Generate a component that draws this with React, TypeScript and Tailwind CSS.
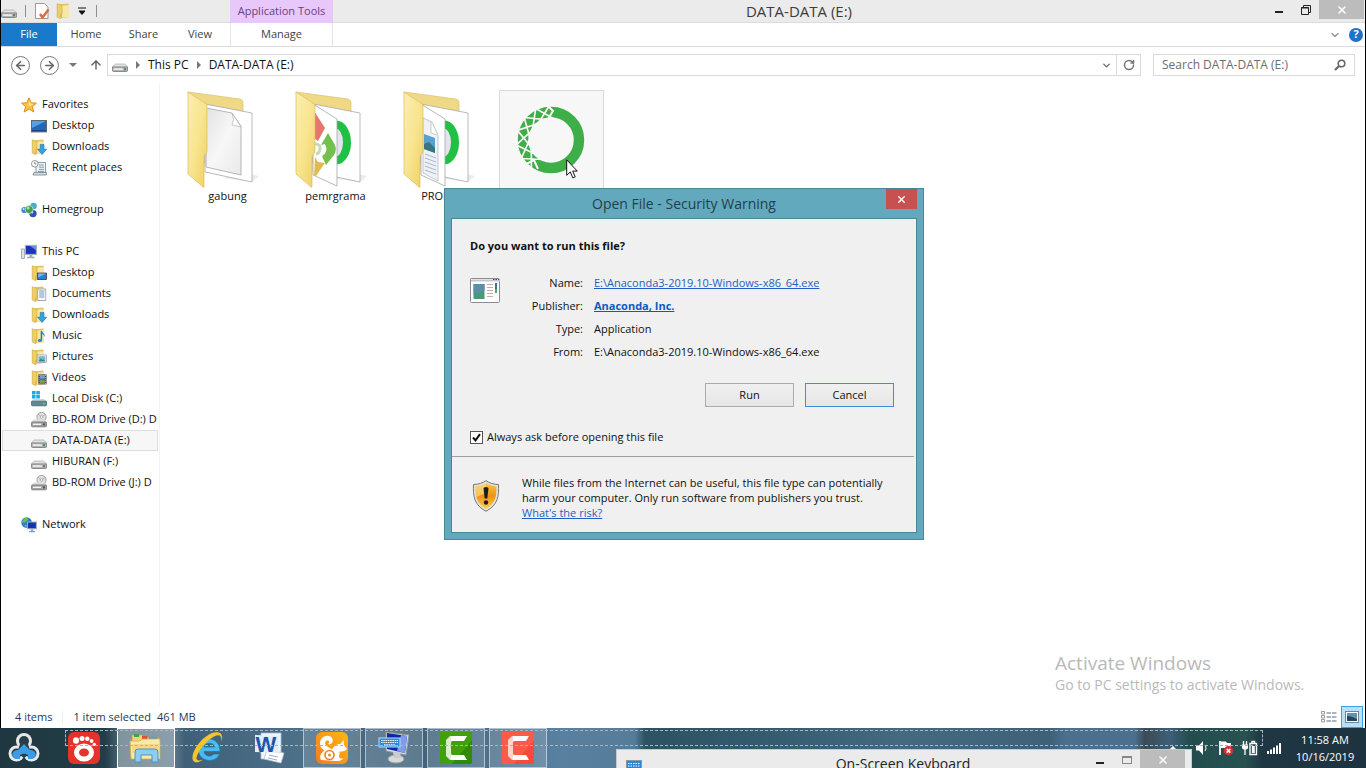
import React from "react";
import {
  ArrowLeft,
  ArrowRight,
  ArrowUp,
  ChevronDown,
  RotateCw,
  X,
} from "lucide-react";

type IconProps = { className?: string };

function DriveIcon({ className = "h-4 w-4" }: IconProps) {
  return (
    <svg viewBox="0 0 16 16" className={className} aria-hidden="true">
      <path d="M3.500 7h9L16 10v1H0v-1z" fill="#e3e3e3" stroke="#9a9a9a" strokeWidth=".6" />
      <rect x=".4" y="9.900" width="15.200" height="4.600" rx="1.200" fill="#b2b2b2" stroke="#777" strokeWidth=".8" />
      <rect x="1.800" y="11.300" width="9" height="1.600" fill="#f0f0f0" />
      <rect x="12" y="11.200" width="2" height="2" fill="#4d8a4f" />
    </svg>
  );
}

function OpticalIcon() {
  return (
    <svg viewBox="0 0 16 16" className="h-4 w-4" aria-hidden="true">
      <circle cx="10.5" cy="5" r="4.6" fill="#e2e2e2" stroke="#8e8e8e" strokeWidth=".8" />
      <path d="M10.5 5L7 2.2M10.5 5l3.6-2.4" stroke="#aaa" strokeWidth=".8" />
      <circle cx="10.5" cy="5" r="1.3" fill="#fff" stroke="#888" strokeWidth=".6" />
      <path d="M2.5 7.5h6l6 .5 1.5 2v1H0z" fill="#dcdcdc" />
      <rect x=".4" y="10" width="15.2" height="4.8" rx="1.2" fill="#a2a2a2" stroke="#6f6f6f" strokeWidth=".8" />
      <rect x="2" y="11.6" width="8" height="1.4" fill="#f2f2f2" />
      <rect x="12" y="11.4" width="2" height="2" fill="#555" />
    </svg>
  );
}

function LocalDiskIcon() {
  return (
    <svg viewBox="0 0 16 16" className="h-4 w-4" aria-hidden="true">
      <path d="M1 0h3.6v3.4H1zM5.3 0h3.6v3.4H5.3zM1 4.1h3.6v3.4H1zM5.3 4.1h3.6v3.4H5.3z" fill="#18aee4" />
      <path d="M2.5 8h10.5l3 2.6v.8H0v-.8z" fill="#cfd6da" />
      <rect x=".4" y="10.2" width="15.2" height="4.6" rx="1" fill="#5f8794" stroke="#4c626b" strokeWidth=".8" />
      <rect x="11.8" y="11.6" width="2.2" height="2" fill="#56c46a" />
    </svg>
  );
}

function SmallFolder({ children, className = "h-4 w-4" }: IconProps & { children?: React.ReactNode }) {
  return (
    <svg viewBox="0 0 16 16" className={className} aria-hidden="true">
      <path d="M4 1.2l8.500-.7v13.8L4 15z" fill="#e3c25c" />
      <path d="M6 2.6l7-.4v12L6 14.6z" fill="#f8e7a4" />
      <path d="M1.2.8L6 2.400v8.400l-1.200.6v4.400L1.200 14z" fill="#f0cf62" stroke="#c9a43c" strokeWidth=".6" />
      {children}
    </svg>
  );
}

const DownloadsIcon = () => (
  <SmallFolder>
    <path d="M9.2 5.6h3.8v4.6h2.6L11.1 15.6 6.6 10.2h2.6z" fill="#35a3e0" stroke="#1c6ea8" strokeWidth=".6" />
  </SmallFolder>
);
const FolderDesktopIcon = () => (
  <SmallFolder>
    <rect x="6.6" y="8" width="9" height="6.6" fill="#2f7bd4" stroke="#333" strokeWidth=".7" />
    <path d="M7.2 8.6h7.8L7.2 12.6z" fill="#7db5ef" />
  </SmallFolder>
);
const DocumentsIcon = () => (
  <SmallFolder>
    <rect x="6.8" y="3" width="8" height="11.4" fill="#fbfbfb" stroke="#8b96a3" strokeWidth=".7" />
    <path d="M8.2 5h5.2M8.2 7h5.2M8.2 9h5.2M8.2 11h5.2" stroke="#4f79b8" strokeWidth=".8" />
  </SmallFolder>
);
const MusicIcon = () => (
  <SmallFolder>
    <path d="M10.4 3v9" stroke="#1a78c2" strokeWidth="1.4" />
    <path d="M10.6 2.4c.4 2.4 4.4 2.8 2.8 7 .2-2.4-1.4-3-2.8-3.6z" fill="#2c8edb" />
    <ellipse cx="8.9" cy="12.4" rx="2.2" ry="1.6" fill="#2c8edb" />
  </SmallFolder>
);
const PicturesIcon = () => (
  <SmallFolder>
    <rect x="6.2" y="6" width="9.4" height="7.6" fill="#fff" stroke="#8b96a3" strokeWidth=".7" />
    <rect x="7.4" y="7.2" width="7" height="5.2" fill="#76b6d8" />
    <path d="M7.4 12.4l2.4-3 1.8 1.6 1.2-.8 1.6 2.2z" fill="#3e8b63" />
  </SmallFolder>
);
const VideosIcon = () => (
  <SmallFolder>
    <rect x="7.2" y="4.4" width="8.4" height="10" fill="#3f4750" />
    <rect x="9" y="5" width="4.8" height="3.8" fill="#6aa0d6" />
    <rect x="9" y="9.6" width="4.8" height="4.2" fill="#7f9a57" />
    <path d="M8.1 5v9M14.7 5v9" stroke="#dfe5ea" strokeWidth=".8" strokeDasharray="1 1" />
  </SmallFolder>
);

const StarIcon = () => (
  <svg viewBox="0 0 16 16" className="h-4 w-4" aria-hidden="true">
    <path d="M8 .8l2.1 5 5.3.4-4.1 3.4 1.5 5.4L8 12l-4.8 3 1.5-5.4L.6 6.2l5.3-.4z" fill="#f9c440" stroke="#e08a1b" strokeLinejoin="round" />
    <path d="M8 3l1.4 3.6 3.2.4L8 9z" fill="#fde79b" />
  </svg>
);
const DesktopIcon = () => (
  <svg viewBox="0 0 16 16" className="h-4 w-4" aria-hidden="true">
    <rect x=".5" y="2.5" width="15" height="11.4" fill="#2567bd" stroke="#5d6873" />
    <path d="M1 3h14L1 10z" fill="#5c9de2" />
    <path d="M1 12.6h14" stroke="#1b3e72" />
  </svg>
);
const RecentIcon = () => (
  <svg viewBox="0 0 16 16" className="h-4 w-4" aria-hidden="true">
    <path d="M5 2.5h9.5V13H5z" fill="#eef3f6" stroke="#77838c" strokeWidth=".8" />
    <path d="M7.8 5h5M8 7.2h5M8 9.4h5M7 11.4h6" stroke="#7f9cab" />
    <path d="M3 12.4h12.4v2.6H2z" fill="#d2dbe0" stroke="#77838c" strokeWidth=".8" />
    <circle cx="3.8" cy="3.8" r="3.3" fill="#fff" stroke="#7d8a84" strokeWidth=".9" />
    <path d="M3.8 1.8v2.2h1.6" fill="none" stroke="#3e7b4c" strokeWidth=".8" />
  </svg>
);
const HomegroupIcon = () => (
  <svg viewBox="0 0 16 16" className="h-4 w-4" aria-hidden="true">
    <circle cx="12.6" cy="4" r="3.2" fill="#46b0c9" />
    <circle cx="3.4" cy="8" r="3.1" fill="#3f8fd0" />
    <circle cx="12" cy="11.6" r="3.7" fill="#3055a8" />
    <circle cx="8.2" cy="7.6" r="4" fill="#43a047" stroke="#fff" strokeWidth=".5" />
    <circle cx="7.2" cy="6" r="1.5" fill="#a9dfa5" />
    <circle cx="11.2" cy="10.4" r="1.1" fill="#b9cdf2" />
    <circle cx="2.6" cy="7" r=".9" fill="#d0e8fb" />
  </svg>
);
const ComputerIcon = () => (
  <svg viewBox="0 0 16 16" className="h-4 w-4" aria-hidden="true">
    <rect x=".4" y="5" width="3" height="9.6" fill="#dfe3e6" stroke="#8c9399" strokeWidth=".7" />
    <rect x="4.4" y="1.4" width="11" height="9" fill="#1b35b8" stroke="#aab2ba" strokeWidth="1.1" />
    <path d="M9 2l6 0v4z" fill="#6c8df0" />
    <path d="M8.4 11h3v1.8h2.2v1.4H6v-1.4h2.4z" fill="#a6adb3" />
  </svg>
);
const NetworkIcon = () => (
  <svg viewBox="0 0 16 16" className="h-4 w-4" aria-hidden="true">
    <circle cx="5.6" cy="5.6" r="5.3" fill="#2b7fd0" />
    <path d="M2 2.6c2-2 4-1.8 5.6-1L6 4 3.8 5.6 1 6z" fill="#63c14f" />
    <path d="M3 8l3 .6-1 2.2z" fill="#63c14f" />
    <rect x="6.4" y="5" width="9" height="6.8" fill="#1633b4" stroke="#a9b3c0" />
    <path d="M9.8 12.4h2.6V14H14v1.2H8V14h1.8z" fill="#7fa3c2" />
  </svg>
);

type NavEntry = { label: string; icon: React.ReactNode; root?: boolean; selected?: boolean };
const nav: NavEntry[][] = [
  [
    { label: "Favorites", icon: <StarIcon />, root: true },
    { label: "Desktop", icon: <DesktopIcon /> },
    { label: "Downloads", icon: <DownloadsIcon /> },
    { label: "Recent places", icon: <RecentIcon /> },
  ],
  [{ label: "Homegroup", icon: <HomegroupIcon />, root: true }],
  [
    { label: "This PC", icon: <ComputerIcon />, root: true },
    { label: "Desktop", icon: <FolderDesktopIcon /> },
    { label: "Documents", icon: <DocumentsIcon /> },
    { label: "Downloads", icon: <DownloadsIcon /> },
    { label: "Music", icon: <MusicIcon /> },
    { label: "Pictures", icon: <PicturesIcon /> },
    { label: "Videos", icon: <VideosIcon /> },
    { label: "Local Disk (C:)", icon: <LocalDiskIcon /> },
    { label: "BD-ROM Drive (D:) D", icon: <OpticalIcon /> },
    { label: "DATA-DATA (E:)", icon: <DriveIcon />, selected: true },
    { label: "HIBURAN (F:)", icon: <DriveIcon /> },
    { label: "BD-ROM Drive (J:) D", icon: <OpticalIcon /> },
  ],
  [{ label: "Network", icon: <NetworkIcon />, root: true }],
];

function FolderArt({ children }: { children: React.ReactNode }) {
  return (
    <svg viewBox="5 6 105 98" className="h-[98px] w-full" aria-hidden="true">
      <defs>
        <linearGradient id="flap" x1="0" y1="0" x2="1" y2="1">
          <stop offset="0" stopColor="#fbeeb0" />
          <stop offset=".5" stopColor="#f8e58f" />
          <stop offset="1" stopColor="#efcf66" />
        </linearGradient>
        <linearGradient id="sheet" x1="0" y1="0" x2="1" y2="1">
          <stop offset="0" stopColor="#e2e2e2" />
          <stop offset=".5" stopColor="#f7f7f7" />
          <stop offset="1" stopColor="#e9e9e9" />
        </linearGradient>
      </defs>
      <path d="M80 90l9 2-7 6-30-4z" fill="#ececec" />
      <path d="M18 8l52 7q3 1 3 4v76L37 88z" fill="#efd987" stroke="#dcc16a" strokeWidth=".7" />
      <path d="M35 20l47 9v69l-47-10z" fill="#fff" stroke="#a9a9a9" strokeWidth=".8" />
      {children}
      <path d="M18 8l17 11q2 1 2 3v45q0 2-2 4l-1 1v31q-1 1-2-1L18 90z" fill="url(#flap)" stroke="#dcbc5e" strokeWidth=".7" />
    </svg>
  );
}

const FrontPage = () => (
  <path d="M35 20l24 15v67L35 91z" fill="#fff" stroke="#a5a5a5" strokeWidth=".8" />
);
const GreenRing = () => (
  <ellipse cx="58" cy="58.500" rx="11" ry="18" fill="#e4e4ee" stroke="#1fc043" strokeWidth="8" />
);

function SheetArt() {
  return (
    <FolderArt>
      <path d="M36 24l26 5 9 13v49L36 83z" fill="url(#sheet)" stroke="#a5a5a5" strokeWidth=".8" />
      <path d="M62 29q3 7 0 12l9 2z" fill="#fff" stroke="#b5b5b5" strokeWidth=".7" />
    </FolderArt>
  );
}
function ProgramArt() {
  return (
    <FolderArt>
      <GreenRing />
      <FrontPage />
      <path d="M36 27l11 17-7 13-4-3z" fill="#e8756d" />
      <path d="M50 49l7 12q2 5-1 10l-8 10-4-9q7-4 3-12l-4 1z" fill="#74c04f" />
      <path d="M37 73l3 5 7 1-9 13h-2z" fill="#e0bb55" />
      <path d="M37 60q6 0 5 5t-4 5" fill="none" stroke="#c4d9b8" strokeWidth="3" />
    </FolderArt>
  );
}
function ReportArt() {
  return (
    <FolderArt>
      <GreenRing />
      <FrontPage />
      <path d="M37 34l9 4 6 13v46l-15-8z" fill="#eef1f6" stroke="#aeb4bd" strokeWidth=".7" />
      <path d="M45 38v11l6 2" fill="#fff" stroke="#b5c29c" strokeWidth=".7" />
      <path d="M38 50l11 4v15l-11-4z" fill="#5b9fd0" />
      <path d="M38 60l5-2 6 6v5l-11-4z" fill="#3a7480" />
      <path d="M39 70l11 4M39 74l11 4M39 78l11 4M39 82l11 4M39 86l11 4" stroke="#a9b7cd" />
    </FolderArt>
  );
}

function ringPoint(radius: number, degrees: number) {
  const a = (degrees * Math.PI) / 180;
  return `${(51 + radius * Math.cos(a)).toFixed(1)} ${(49 - radius * Math.sin(a)).toFixed(1)}`;
}
const latticePath = [92, 116, 140, 164, 188, 212, 236]
  .map((a) => {
    const back = a > 92 ? `M${ringPoint(35, a)}L${ringPoint(21, a - 36)}` : "";
    const forth = a < 236 ? `M${ringPoint(35, a)}L${ringPoint(21, a + 36)}` : "";
    return back + forth;
  })
  .join("");

function AnacondaArt() {
  return (
    <svg viewBox="0 0 103 98" className="h-[98px] w-full" aria-hidden="true">
      <circle cx="51" cy="49" r="28" fill="none" stroke="#3eae49" strokeWidth="10.500" />
      <path d={latticePath} stroke="#f7f7f7" strokeWidth="1.700" fill="none" />
      <path d="M47 14l6 6-5 8M24 74l10-5 4 9" stroke="#f7f7f7" strokeWidth="2" fill="none" />
    </svg>
  );
}

const files = [
  { name: "gabung", art: <SheetArt /> },
  { name: "pemrgrama", art: <ProgramArt /> },
  { name: "PRODUK", art: <ReportArt /> },
];

function TitleBar() {
  return (
    <header className="grid h-[23px] grid-cols-[229px_103px_1fr_auto] border-b border-[#dcdcdc] bg-[#ebebeb]">
      <div className="flex items-center">
        <DriveIcon className="h-4 w-4" />
        <span className="ml-2 h-3 w-px bg-[#8f8f8f]" />
        <svg viewBox="0 0 16 16" className="ml-2 h-4 w-4" aria-hidden="true">
          <path d="M1.500.5h9l3.500 3.500v11.500H1.500z" fill="#fff" stroke="#999" />
          <path d="M6 11l2.500 3.500 6-8" fill="none" stroke="#e0683a" strokeWidth="2.400" />
        </svg>
        <SmallFolder className="ml-[6px] h-4 w-4" />
        <svg viewBox="0 0 8 8" className="ml-[6px] h-2 w-2" aria-hidden="true">
          <path d="M0 1h8M1 4h6L4 7.500z" stroke="#111" fill="#111" />
        </svg>
        <span className="ml-[10px] h-3 w-px bg-[#8f8f8f]" />
      </div>
      <div className="flex items-center justify-center bg-[#e8c8fb] text-[11px] whitespace-nowrap text-[#6b3f80]">Application Tools</div>
      <h1 className="flex items-center justify-center text-[15px] text-[#3c3c3c]">DATA-DATA (E:)</h1>
      <div className="flex items-start pr-px">
        <button aria-label="Minimize" className="flex h-[19px] w-[27px] items-end justify-center pb-[6px]">
          <span className="h-[2px] w-2 bg-[#222]" />
        </button>
        <button aria-label="Restore" className="flex h-[19px] w-[27px] items-center justify-center">
          <svg viewBox="0 0 10 10" className="h-[10px] w-[10px]" aria-hidden="true">
            <path d="M2.500 2V.5h7v7H8M.5 2.500h7v7h-7z" fill="none" stroke="#222" />
            <path d="M0 3h8" stroke="#222" />
          </svg>
        </button>
        <button aria-label="Close" className="flex h-[19px] w-[45px] items-center justify-center bg-[#bcbcbc] text-white">
          <X size={12} strokeWidth={3} />
        </button>
      </div>
    </header>
  );
}

function Ribbon() {
  return (
    <nav className="flex h-6 items-stretch border-b border-[#dadbdc] text-[11px] text-[#444]">
      <button className="w-14 bg-[#1979ca] text-white">File</button>
      <button className="w-[58px]">Home</button>
      <button className="w-[57px]">Share</button>
      <button className="w-14">View</button>
      <button className="ml-[2px] w-[103px] border-x border-[#e6e0ea]">Manage</button>
      <div className="ml-auto flex items-center gap-2 pr-[2px]">
        <button aria-label="Expand ribbon">
          <ChevronDown size={12} strokeWidth={3} color="#999" />
        </button>
        <button aria-label="Help" className="flex h-[14px] w-[14px] items-center justify-center rounded-full bg-[#1e73c8] text-[11px] font-bold text-white">
          ?
        </button>
      </div>
    </nav>
  );
}

function Crumb() {
  return (
    <svg viewBox="0 0 4 8" className="h-2 w-1" aria-hidden="true">
      <path d="M0 0l4 4-4 4z" fill="#777" />
    </svg>
  );
}

function AddressRow() {
  return (
    <div className="flex h-9 items-center px-[10px] text-[12px]">
      <button aria-label="Back" className="flex h-[19px] w-[19px] items-center justify-center rounded-full border border-[#777] text-[#666]">
        <ArrowLeft size={13} strokeWidth={3} />
      </button>
      <button aria-label="Forward" className="ml-[10px] flex h-[19px] w-[19px] items-center justify-center rounded-full border border-[#777] text-[#666]">
        <ArrowRight size={13} strokeWidth={3} />
      </button>
      <button aria-label="Recent locations" className="ml-[10px]">
        <svg viewBox="0 0 8 4" className="h-1 w-2" aria-hidden="true">
          <path d="M0 0h8L4 4z" fill="#777" />
        </svg>
      </button>
      <button aria-label="Up" className="ml-3 text-[#666]">
        <ArrowUp size={14} strokeWidth={2.5} />
      </button>
      <div className="ml-1 flex h-[22px] flex-1 items-center border border-[#d9d9d9] pl-1">
        <DriveIcon />
        <div className="ml-2 flex items-center gap-2">
          <Crumb />
          <a href="#this-pc">This PC</a>
          <Crumb />
          <a href="#data">DATA-DATA (E:)</a>
        </div>
        <button aria-label="Previous locations" className="ml-auto flex h-full w-[19px] items-center justify-center">
          <ChevronDown size={11} strokeWidth={3} color="#666" />
        </button>
        <button aria-label="Refresh" className="flex h-full w-6 items-center justify-center border-l border-[#d9d9d9]">
          <RotateCw size={12} strokeWidth={3} color="#777" />
        </button>
      </div>
      <label className="ml-3 flex h-[22px] w-[202px] items-center border border-[#d9d9d9] px-2">
        <input type="search" aria-label="Search DATA-DATA (E:)" placeholder="Search DATA-DATA (E:)" className="min-w-0 flex-1 outline-none placeholder:text-[#6d6d6d]" />
        <svg viewBox="0 0 12 12" className="h-3 w-3" aria-hidden="true">
          <circle cx="7.500" cy="4.500" r="3.300" fill="none" stroke="#666" strokeWidth="1.600" />
          <path d="M5 7L1 11" stroke="#666" strokeWidth="2.200" />
        </svg>
      </label>
    </div>
  );
}

function Sidebar() {
  return (
    <aside className="flex w-[159px] flex-col gap-[21px] overflow-hidden border-r border-[#f3f3f3] pt-[11px] text-[11px]">
      {nav.map((group) => (
        <ul key={group[0].label}>
          {group.map((item) => (
            <li
              key={item.label}
              className={
                "mr-px ml-px flex h-[21px] items-center gap-[5px] overflow-hidden border whitespace-nowrap " +
                (item.root ? "pl-[18px] " : "pl-7 ") +
                (item.selected ? "border-[#dedede] bg-[#f7f7f7]" : "border-transparent")
              }
            >
              <span className="shrink-0">{item.icon}</span>
              <span>{item.label}</span>
            </li>
          ))}
        </ul>
      ))}
    </aside>
  );
}

function SecurityDialog() {
  const rows = [
    { label: "Name:", value: <a href="#file" className="text-[#1f5fc4] underline">E:\Anaconda3-2019.10-Windows-x86_64.exe</a> },
    { label: "Publisher:", value: <a href="#publisher" className="font-bold text-[#0a5bc4] underline">Anaconda, Inc.</a> },
    { label: "Type:", value: "Application" },
    { label: "From:", value: "E:\\Anaconda3-2019.10-Windows-x86_64.exe" },
  ];
  return (
    <section role="dialog" aria-label="Open File - Security Warning" className="absolute top-[188px] left-[444px] w-[480px] border border-[#4c8598] bg-[#63a9be] px-[6px] pb-[6px] text-[11px]">
      <div className="relative flex h-[29px] items-center justify-center">
        <h2 className="text-[14px] text-[#23404a]">Open File - Security Warning</h2>
        <button aria-label="Close" className="absolute top-0 right-0 flex h-5 w-[31px] items-center justify-center bg-[#c75050] text-white">
          <X size={11} strokeWidth={3} />
        </button>
      </div>
      <div className="border border-[#4c8598] bg-[#f0f0f0]">
        <div className="px-[18px] pt-[19px] pb-[11px]">
          <p className="font-bold leading-4">Do you want to run this file?</p>
          <div className="mt-[21px] flex">
            <svg viewBox="0 0 31 26" className="mt-[3px] h-[26px] w-[31px]" aria-hidden="true">
              <rect x=".5" y=".5" width="29" height="24" rx="1" fill="#fff" stroke="#8b8b92" />
              <path d="M1 2.500h29" stroke="#c4c4d0" strokeWidth="2" />
              <path d="M23 1.500h1.500M25.500 1.500H27M28 1.500h1" stroke="#444" />
              <rect x="3.500" y="6" width="11" height="15" fill="#4a9a79" />
              <path d="M3.500 6h11v6l-11 5z" fill="#5b8fa8" />
              <path d="M17 6.500h6M17 9.500h6M17 12.500h6M17 15.500h6M17 18.500h6" stroke="#c9a9a9" />
              <rect x="25" y="5" width="2" height="10" fill="#3a6f9f" />
              <rect x="25" y="11" width="2" height="4" fill="#4caf50" />
            </svg>
            <dl className="grid flex-1 grid-cols-[82px_1fr] gap-x-[11px] gap-y-[7px] leading-4">
              {rows.map((row) => (
                <React.Fragment key={row.label}>
                  <dt className="text-right">{row.label}</dt>
                  <dd>{row.value}</dd>
                </React.Fragment>
              ))}
            </dl>
          </div>
          <div className="mt-[23px] flex justify-end gap-[11px] pr-1">
            <button className="h-6 w-[89px] border border-[#acacac] bg-linear-to-b from-[#f0f0f0] to-[#e6e6e6]">Run</button>
            <button className="h-6 w-[89px] border border-[#3c8fe0] bg-linear-to-b from-[#f0f0f0] to-[#e6e6e6]">Cancel</button>
          </div>
          <label className="mt-[22px] flex items-center gap-1 leading-4">
            <span className="relative flex h-[13px] w-[13px]">
              <input type="checkbox" defaultChecked className="peer h-[13px] w-[13px] appearance-none border border-[#555] bg-white" />
              <svg viewBox="0 0 13 13" className="pointer-events-none absolute inset-0 hidden h-[13px] w-[13px] peer-checked:block" aria-hidden="true">
                <path d="M3 6.500l2.500 2.800L10 3.200" fill="none" stroke="#111" strokeWidth="2" />
              </svg>
            </span>
            Always ask before opening this file
          </label>
        </div>
        <div className="mr-[2px] border-t border-[#a0a0a0]" />
        <div className="flex gap-[22px] px-5 pt-[18px] pb-3">
          <svg viewBox="0 0 28 32" className="mt-[5px] h-8 w-7" aria-hidden="true">
            <defs>
              <linearGradient id="shield" x1="0" y1="0" x2="0" y2="1">
                <stop offset="0" stopColor="#fbc64a" />
                <stop offset=".5" stopColor="#f0920f" />
                <stop offset="1" stopColor="#fbd55a" />
              </linearGradient>
            </defs>
            <path d="M14 .7C11 3 6 4.500 1.500 4.500 1 16 2 25 14 31.300 26 25 27 16 26.500 4.500 22 4.500 17 3 14 .7z" fill="#e3e3e3" stroke="#777" />
            <path d="M14 3C11 5 7 6.200 3.500 6.400 3.300 16 4.500 23.500 14 29 23.500 23.500 24.700 16 24.500 6.400 21 6.200 17 5 14 3z" fill="url(#shield)" />
            <path d="M14 3c-3 2-7 3.200-10.500 3.400C3.400 11 3.600 14 4.600 17L14 13z" fill="#fde08a" opacity=".6" />
            <path d="M11.500 8q2.500-1.800 5 0l-1.200 10.500h-2.600z" fill="#1d1d1d" />
            <circle cx="14" cy="22.500" r="2.200" fill="#1d1d1d" />
          </svg>
          <p className="flex-1 leading-[15px]">
            While files from the Internet can be useful, this file type can potentially
            <br />
            harm your computer. Only run software from publishers you trust.
            <br />
            <a href="#risk" className="text-[#1f5fc4] underline">What's the risk?</a>
          </p>
        </div>
      </div>
    </section>
  );
}

const StartLogo = () => (
  <svg viewBox="0 0 32 32" className="h-8 w-8" aria-hidden="true">
    <g fill="#e9e9e9">
      <circle cx="16" cy="9" r="8" />
      <circle cx="8.500" cy="21.500" r="8" />
      <circle cx="23.500" cy="21.500" r="8" />
    </g>
    <g fill="#263f49">
      <circle cx="16" cy="9" r="5" />
      <circle cx="8.500" cy="21.500" r="5" />
      <circle cx="23.500" cy="21.500" r="5" />
      <path d="M12 12h8l3 9-7 5-7-5z" />
    </g>
    <path d="M16 12l6 6q5 0 6 5-1 4-5 4h-3v-4q-4-2.500-8 0v4H9q-4 0-5-4 1-5 6-5z" fill="#3a9be6" />
  </svg>
);
const GomLogo = () => (
  <svg viewBox="0 0 32 32" className="h-8 w-8" aria-hidden="true">
    <rect width="32" height="32" rx="6" fill="#e5322b" />
    <ellipse cx="16" cy="20.500" rx="7.500" ry="6.500" fill="none" stroke="#fff" strokeWidth="5" />
    <ellipse cx="8" cy="8.500" rx="3" ry="3.200" fill="#fff" />
    <circle cx="14" cy="6.500" r="2.500" fill="#fff" />
    <circle cx="19.300" cy="6.800" r="2.200" fill="#fff" />
    <circle cx="23.600" cy="9" r="1.900" fill="#fff" />
    <circle cx="26.300" cy="12.400" r="1.700" fill="#fff" />
  </svg>
);
const ExplorerLogo = () => (
  <svg viewBox="0 0 34 32" className="h-8 w-[34px]" aria-hidden="true">
    <path d="M3 3h10l2 3h15v8H3z" fill="#f2d478" stroke="#c8a13f" strokeWidth=".8" />
    <path d="M5 2h5v3H5z" fill="#33a852" />
    <path d="M13 4h5v3h-5z" fill="#d9503c" />
    <path d="M20 5h8v3h-8z" fill="#4a9be0" />
    <path d="M1 9h10l2-2h18v20H2z" fill="#fbe9a6" stroke="#d1ac4f" strokeWidth=".8" />
    <path d="M3 12h27v9H3z" fill="#f5d985" />
    <path d="M6 30V20q0-3 3-3h17q3 0 3 3v10h-6v-7H12v7z" fill="#8ecdf0" stroke="#4d93c1" />
  </svg>
);
const InternetLogo = () => (
  <svg viewBox="0 0 32 32" className="h-8 w-8" aria-hidden="true">
    <path d="M28 19.500H12c.5 5 7.500 6 9.500 2.500H27.600c-3.600 10-21.400 8.500-21.400-5C6.200 3 28.400 3 28 19.500zM12 15h10.500c-.4-5-10.100-5-10.500 0z" fill="#4bb8f0" stroke="#1c78b8" strokeWidth=".8" />
    <path d="M29.500 10C33-2 22-1.500 14 4.500 5 11-3 25 2 29.500c2 1.800 6 .5 9-2-5.500 2-7.500.5-6-3.500C7.500 16.500 16 7.500 23 4c5-2 7 .5 6.500 6z" fill="#f5c32b" />
  </svg>
);
const WordLogo = () => (
  <svg viewBox="0 0 32 32" className="h-8 w-8" aria-hidden="true">
    <path d="M7 1h20v26H7z" fill="#f1f6fd" stroke="#a9bedb" strokeWidth=".8" />
    <path d="M13 18l17 3-3 10-17-4z" fill="#fff" stroke="#b6c2d2" strokeWidth=".8" />
    <path d="M15 23l9 2M14 26l9 2" stroke="#9fb1c8" />
    <path d="M1 3l24 1-1 17-23-1z" fill="#e2ecfa" />
    <text x="1.500" y="20" fontSize="22" fontWeight="700" fontFamily="Liberation Sans, sans-serif" fill="#1f54ad">W</text>
  </svg>
);
const BrowserLogo = () => (
  <svg viewBox="0 0 32 32" className="h-8 w-8" aria-hidden="true">
    <defs>
      <linearGradient id="browser" x1="0" y1="1" x2="1" y2="0">
        <stop offset="0" stopColor="#f57a1f" />
        <stop offset="1" stopColor="#fbb812" />
      </linearGradient>
    </defs>
    <rect width="32" height="32" rx="6" fill="url(#browser)" />
    <path d="M5 28c-2-4 0-7 3.500-9.500C3 16 2 8 8 4.500c5-2.500 10 1 8.500 5.500-.8 2-3 3-4.500 2 2-1.500 1-4-1-3.500-3 1-2 5 1 6.500 2 1 3 1.500 4 2.500 2-4 5-5.500 8.500-5.500l3-4 .5 5 3 4c-2 2.500-5 2.500-7.500 2.500.5 2-.5 4-.5 5.500 1 1.500 2.500 2 4.500 1-2 3-5 3-8 3z" fill="#fff" />
    <circle cx="13.500" cy="23" r="4.500" fill="#fff" stroke="#f2831c" strokeWidth="1.700" />
    <circle cx="13.500" cy="23" r="1.500" fill="#f48a1c" />
  </svg>
);
const KeyboardLogo = () => (
  <svg viewBox="0 0 32 32" className="h-8 w-8" aria-hidden="true">
    <path d="M8 0l23 3-3 20L8 19z" fill="#d9dde2" stroke="#8d949c" />
    <path d="M9 1l20 3-2 17-18-4z" fill="#1226a6" />
    <path d="M23 3l6 1-2 17-8-2z" fill="#7b9eea" />
    <ellipse cx="18" cy="27" rx="8" ry="4" fill="#d8dada" stroke="#9ba0a0" />
    <path d="M15 20h7l1 6h-7z" fill="#c9cccf" />
    <rect x="1" y="6" width="21" height="9" fill="#2a8bd8" stroke="#b9dcf5" />
    <path d="M3 8.500h17M3 10.500h17M6 12.800h11" stroke="#fff" strokeWidth="1.200" strokeDasharray="1.500 .8" />
  </svg>
);
const GreenCaptureLogo = () => (
  <svg viewBox="0 0 32 32" className="h-8 w-8" aria-hidden="true">
    <rect width="32" height="32" rx="2" fill="#2f8a05" />
    <path d="M0 0h32v8L12 32H0z" fill="#41a10c" />
    <path d="M10 4h17l-3 5H12l-2 2z" fill="#fff" />
    <path d="M10 28h17l-3-5H12l-2-2z" fill="#fff" />
    <path d="M10 4L6 8v16l4 4h1V4z" fill="#dbeccf" />
  </svg>
);
const RedCaptureLogo = () => (
  <svg viewBox="0 0 32 32" className="h-8 w-8" aria-hidden="true">
    <rect width="32" height="32" rx="2" fill="#f9493c" />
    <path d="M0 0h32v8L12 32H0z" fill="#fb5b49" />
    <path d="M10 4h17l-3 5H12l-2 2z" fill="#fff" />
    <path d="M10 28h17l-3-5H12l-2-2z" fill="#fff" />
    <path d="M10 4L6 8v16l4 4h1V4z" fill="#fcd3cd" />
  </svg>
);

const apps = [
  { name: "GOM Player", logo: <GomLogo />, frame: "border-transparent" },
  { name: "File Explorer", logo: <ExplorerLogo />, frame: "border-white bg-white/30" },
  { name: "Internet Explorer", logo: <InternetLogo />, frame: "border-transparent" },
  { name: "Word", logo: <WordLogo />, frame: "border-transparent" },
  { name: "UC Browser", logo: <BrowserLogo />, frame: "border-white/50 bg-white/15" },
  { name: "On-Screen Keyboard", logo: <KeyboardLogo />, frame: "border-white/50 bg-white/15" },
  { name: "Camtasia", logo: <GreenCaptureLogo />, frame: "border-white/50 bg-white/15" },
  { name: "Camtasia Recorder", logo: <RedCaptureLogo />, frame: "border-white/50 bg-white/15" },
];

function Taskbar() {
  return (
    <footer className="relative flex h-10 shrink-0 items-stretch bg-[linear-gradient(90deg,#1f3741_0,#223d48_105px,#4b6575_120px,#5a7688_175px,#3f6078_185px,#4d7089_300px,#41637b_420px,#5a80a0_560px,#557c98_635px,#2d5262_645px,#345a6e_760px,#456a80_900px,#3e6178_1050px,#4b6f8c_1065px,#4b6f8c_1135px,#3b4b56_1145px,#3f5f78_1170px,#234c4d_1190px,#285250_1245px,#1f3743_1262px,#1d3440_100%)]">
      <button aria-label="Start" className="flex w-[51px] items-center justify-center pr-1">
        <StartLogo />
      </button>
      <div className="flex gap-1 pl-[4px]">
        {apps.map((app) => (
          <button key={app.name} aria-label={app.name} className={"flex w-[58px] items-center justify-center border " + app.frame}>
            {app.logo}
          </button>
        ))}
      </div>
      <div className="ml-auto flex items-center gap-2 pr-[10px] text-white">
        <svg viewBox="0 0 10 5" className="mr-2 h-[5px] w-[10px]" aria-hidden="true">
          <path d="M5 0l5 5H0z" fill="#fff" />
        </svg>
        <svg viewBox="0 0 16 16" className="h-4 w-4" aria-hidden="true">
          <path d="M2 5.500h3L9 1v14l-4-4.500H2z" fill="#fff" />
          <path d="M11 5q2 3 0 6" fill="none" stroke="#ccc" strokeWidth="1.200" />
        </svg>
        <svg viewBox="0 0 16 16" className="h-4 w-4" aria-hidden="true">
          <path d="M2 1v14" stroke="#fff" strokeWidth="1.800" />
          <path d="M3 1.500h5l1 1.500h4v6H8L7 8H3z" fill="#fff" />
          <circle cx="10.500" cy="10.800" r="4.700" fill="#d9302c" />
          <path d="M8.700 9l3.600 3.600M12.300 9l-3.600 3.600" stroke="#fff" strokeWidth="1.600" />
        </svg>
        <svg viewBox="0 0 16 16" className="h-4 w-4" aria-hidden="true">
          <path d="M1.500 1v4M4.500 1v4M3 9v6" stroke="#fff" strokeWidth="1.300" />
          <path d="M0 4.500h6v3q0 2-3 2t-3-2z" fill="#fff" />
          <path d="M8 3.500h6.500v11H8zM10 1.500h2.500v2H10z" fill="none" stroke="#fff" strokeWidth="1.400" />
          <path d="M9.800 6h3v7h-3z" fill="#fff" />
        </svg>
        <svg viewBox="0 0 16 16" className="h-4 w-4" aria-hidden="true">
          <path d="M1 11h2v3H1zM4 9.500h2V14H4zM7 7.500h2V14H7zM10 5.500h2V14h-2zM13 3h2v11h-2z" fill="#fff" />
        </svg>
        <div className="ml-1 flex w-[62px] flex-col items-center text-[11px] leading-[17px] whitespace-nowrap">
          <span>11:58 AM</span>
          <span>10/16/2019</span>
        </div>
      </div>
      <div className="pointer-events-none absolute top-[2px] right-[103px] left-[65px] h-4 border border-dashed border-[#a9b8c0]" />
    </footer>
  );
}

function KeyboardWindow() {
  return (
    <section aria-label="On-Screen Keyboard" className="absolute top-[749px] left-[616px] flex h-[19px] w-[576px] items-start justify-between overflow-hidden border border-b-0 border-[#c9c9c9] bg-[#ebebeb]">
      <svg viewBox="0 0 16 12" className="mt-[10px] ml-[9px] h-3 w-4" aria-hidden="true">
        <rect x=".5" y=".5" width="15" height="11" fill="#2a86d6" stroke="#8a98a3" />
        <path d="M2 3.500h12M2 6h12M4 8.500h8" stroke="#fff" strokeDasharray="1.500 1" />
      </svg>
      <h2 className="mt-1 ml-[78px] text-[14px] leading-5 text-[#222]">On-Screen Keyboard</h2>
      <div className="flex h-5">
        <button aria-label="Minimize keyboard" className="flex w-[27px] items-start justify-center pt-3">
          <span className="h-[2px] w-2 bg-[#222]" />
        </button>
        <button aria-label="Maximize keyboard" className="flex w-[27px] items-start justify-center pt-[6px]">
          <span className="h-2 w-[10px] border border-t-2 border-[#888]" />
        </button>
        <button aria-label="Close keyboard" className="mr-[6px] flex w-[45px] items-center justify-center bg-[#bcbcbc] text-white">
          <X size={12} strokeWidth={3} />
        </button>
      </div>
    </section>
  );
}

export default function App() {
  return (
    <div className="relative flex h-screen flex-col overflow-hidden bg-white font-['Open_Sans','Noto_Sans',sans-serif] text-[11px] text-[#111]">
      <div className="flex min-h-0 flex-1 flex-col border-x border-black">
        <TitleBar />
        <Ribbon />
        <AddressRow />
        <div className="flex min-h-0 flex-1">
          <Sidebar />
          <main className="flex flex-1 items-start gap-[3px] pt-[7px] pl-[15px]">
            {files.map((file) => (
              <figure key={file.name} className="w-[105px]">
                {file.art}
                <figcaption className="text-center text-[11px] leading-4">{file.name}</figcaption>
              </figure>
            ))}
            <figure className="h-[116px] w-[105px] border border-[#dadada] bg-[#f7f7f7]">
              <AnacondaArt />
            </figure>
          </main>
        </div>
        <div className="flex h-[22px] shrink-0 items-center pl-[14px] text-[11px] text-[#24395b]">
          <span>4 items</span>
          <span className="mx-[10px] h-3 w-px bg-[#eee]" />
          <span>1 item selected</span>
          <span className="ml-[6px]">461 MB</span>
          <div className="ml-auto flex h-full items-center">
            <button aria-label="Details view" className="flex h-full w-6 items-center justify-center">
              <svg viewBox="0 0 16 12" className="h-3 w-4" aria-hidden="true">
                <path d="M.5.500h3v2.500h-3zM.5 4.500h3V7h-3zM.5 8.500h3V11h-3z" fill="#fff" stroke="#7a8590" strokeWidth=".8" />
                <path d="M5.500 2H10M11 2h4.500M5.500 6H10M11 6h4.500M5.500 10H10M11 10h4.500" stroke="#5b6b80" />
              </svg>
            </button>
            <button aria-label="Large icons view" className="mr-[2px] flex h-[22px] w-[22px] items-center justify-center border border-[#3aa0e0] bg-[#b9e0f8]">
              <svg viewBox="0 0 14 12" className="h-3 w-[14px]" aria-hidden="true">
                <rect x=".5" y=".5" width="13" height="11" fill="#fff" stroke="#77828c" />
                <rect x="2" y="2" width="10" height="8" fill="#5f93b5" />
                <path d="M2 5q4 0 10 3v2H2z" fill="#26445a" />
              </svg>
            </button>
          </div>
        </div>
      </div>
      <Taskbar />

      <div className="pointer-events-none absolute bottom-[73px] left-[1055px] whitespace-nowrap text-[#b9b9b9]">
        <p className="text-[19px] leading-6">Activate Windows</p>
        <p className="text-[14px] leading-5">Go to PC settings to activate Windows.</p>
      </div>
      <SecurityDialog />
      <KeyboardWindow />
      <svg viewBox="0 0 12 20" className="pointer-events-none absolute top-[159px] left-[566px] h-5 w-3" aria-hidden="true">
        <path d="M.7.8v15.500l3.600-3.400 2.500 6 2.400-1-2.500-5.800h4.600z" fill="#fff" stroke="#111" />
      </svg>
    </div>
  );
}
